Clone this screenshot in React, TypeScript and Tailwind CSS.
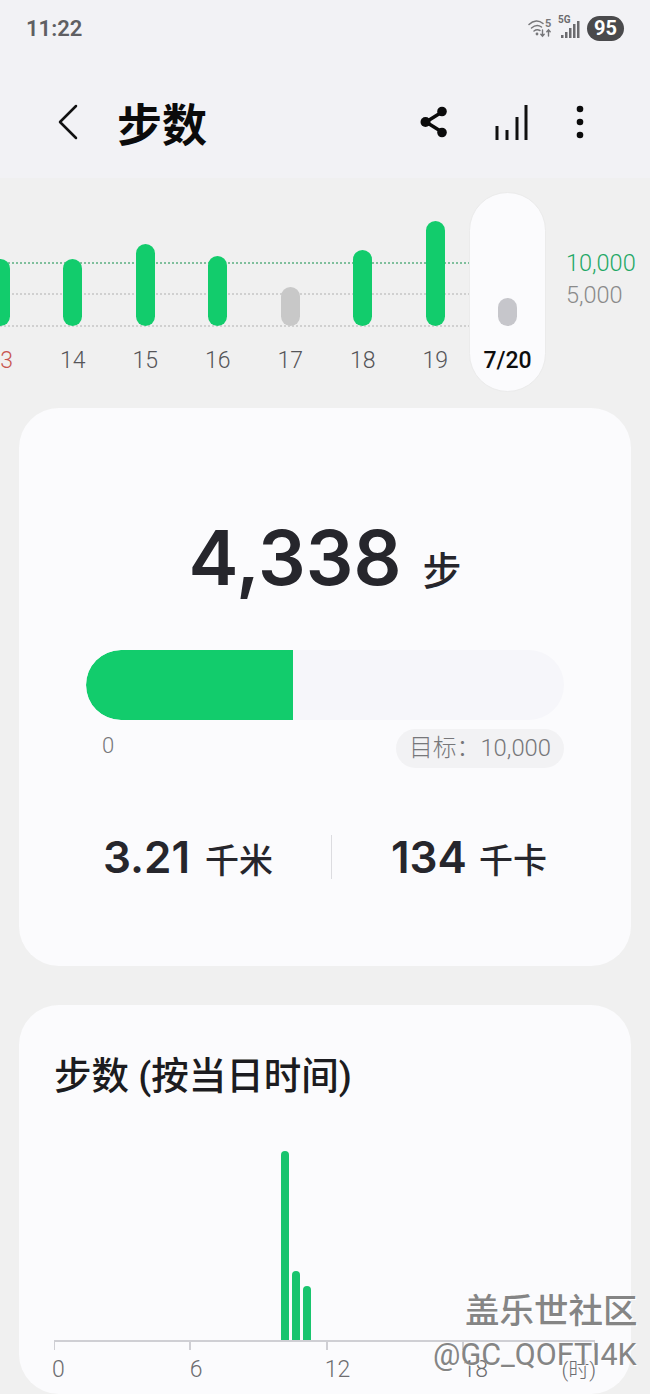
import React from "react";

const cjk = "font-['Inter','Noto_Sans_CJK_SC',sans-serif]";

const days = [
  { l: "13", h: 67, c: "bg-[#12cc6c]", t: "text-[#c8554f]" },
  { l: "14", h: 67, c: "bg-[#12cc6c]", t: "text-[#555558]" },
  { l: "15", h: 82, c: "bg-[#12cc6c]", t: "text-[#555558]" },
  { l: "16", h: 70, c: "bg-[#12cc6c]", t: "text-[#555558]" },
  { l: "17", h: 39, c: "bg-[#c8c8c8]", t: "text-[#555558]" },
  { l: "18", h: 76, c: "bg-[#12cc6c]", t: "text-[#555558]" },
  { l: "19", h: 105, c: "bg-[#12cc6c]", t: "text-[#555558]" },
];

function WifiIcon() {
  return (
    <svg width="26" height="22" viewBox="0 0 26 22" fill="none" stroke="#77777a" strokeLinecap="round">
      <path d="M1 7.500C5.500 3 11 3 15 6.500" strokeWidth="1.500" />
      <path d="M3.500 11C7 8 10.500 8 13.500 10" strokeWidth="1.500" />
      <path d="M6 14c2-1.500 4-1.500 6-.5" strokeWidth="1.500" />
      <circle cx="9" cy="17" r="1.400" fill="#77777a" stroke="none" />
      <path d="M14.500 13v6M12.800 17.300l1.700 1.900 1.700-1.900M20.500 19v-6M18.800 14.800l1.700-1.900 1.700 1.900" strokeWidth="1.400" />
      <text x="17" y="10" fontSize="11" fontWeight="700" fill="#77777a" stroke="none" fontFamily="Roboto">5</text>
    </svg>
  );
}

function SignalIcon() {
  return (
    <svg width="19" height="17" viewBox="0 0 19 17" fill="#6b6b6e">
      <rect x="0" y="14" width="2.500" height="3" />
      <rect x="4" y="11" width="2.500" height="6" />
      <rect x="8" y="7" width="2.500" height="10" />
      <rect x="12" y="3" width="2.500" height="14" />
      <rect x="16" y="0" width="2.500" height="17" />
    </svg>
  );
}

export default function App() {
  return (
    <div className={`relative w-[650px] h-[1394px] overflow-hidden bg-[#f0f0f0] ${cjk}`}>
      <div className="h-[178px] bg-[#f2f2f5] flex flex-col">
        <div className="h-[56px] pl-[26px] pr-[26px] flex items-center justify-between">
          <span className="text-[22px] font-semibold text-[#5f5f62] font-['Roboto',sans-serif]">11:22</span>
          <div className="flex items-center gap-[3px]">
            <WifiIcon />
            <div className="relative w-[23px] h-[22px] ml-[1px]">
              <span className="absolute left-0 -top-[2px] text-[10px] leading-[10px] font-bold text-[#6b6b6e] font-['Roboto',sans-serif]">5G</span>
              <div className="absolute left-[3px] top-[4px]"><SignalIcon /></div>
            </div>
            <div className="ml-[3px] w-[37px] h-[25px] rounded-full bg-[#4a4a4c] flex items-center justify-center text-white text-[20px] font-bold font-['Roboto',sans-serif]">95</div>
          </div>
        </div>
        <div className="flex-1 relative flex items-center pl-[57px] pr-[65px] pt-[10px]">
          <svg width="22" height="36" viewBox="0 0 22 36" fill="none" stroke="#111" strokeWidth="2.500" strokeLinecap="round" strokeLinejoin="round">
            <path d="M19 2 3 18l16 16" />
          </svg>
          <h1 className="ml-[38px] text-[45px] leading-none font-bold text-[#0b0b0b] font-['Noto_Sans_CJK_SC',sans-serif]">步数</h1>
          <div className="ml-auto flex items-center">
            <svg width="32" height="34" viewBox="0 0 32 34" fill="#0b0b0b" stroke="#0b0b0b">
              <path d="M24 7 8 17l16 10" fill="none" strokeWidth="3.500" />
              <circle cx="24" cy="6.500" r="4.800" stroke="none" />
              <circle cx="7.500" cy="17" r="5" stroke="none" />
              <circle cx="24" cy="27.500" r="4.800" stroke="none" />
            </svg>
            <svg className="ml-[44px]" width="34" height="38" viewBox="0 0 34 38" fill="none" stroke="#111" strokeWidth="3">
              <path d="M3 37V23M13 37V27M23 37V14M32 37V2" />
            </svg>
            <svg className="ml-[47px]" width="10" height="34" viewBox="0 0 10 34" fill="#0b0b0b">
              <circle cx="5" cy="4" r="3.300" />
              <circle cx="5" cy="17" r="3.300" />
              <circle cx="5" cy="30" r="3.300" />
            </svg>
          </div>
        </div>
      </div>

      <div className="relative h-[230px] overflow-hidden">
        <div className="absolute left-0 w-[470px] top-[84px] border-t-2 border-dotted border-[#7fbf9c]" />
        <div className="absolute left-0 w-[470px] top-[115px] border-t-2 border-dotted border-[#d0d0d0]" />
        <div className="absolute left-0 w-[470px] top-[147px] border-t-2 border-dotted border-[#d0d0d0]" />

        <div className="relative flex -ml-[36px] pt-[14px]">
          {days.map((d) => (
            <div key={d.l} className="w-[72.500px] shrink-0 h-[200px] flex flex-col items-center">
              <div className="h-[134px] flex items-end">
                <div className={`w-[19px] rounded-full ${d.c}`} style={{ height: d.h }} />
              </div>
              <span className={`mt-[21px] text-[23px] leading-[28px] font-light font-['Roboto',sans-serif] ${d.t}`}>{d.l}</span>
            </div>
          ))}
          <div className="-ml-[2.500px] w-[77px] shrink-0 h-[200px] rounded-full bg-[#fbfbfd] border border-[#ebebeb] flex flex-col items-center">
            <div className="h-[133px] flex items-end">
              <div className="w-[19px] h-[28px] rounded-full bg-[#c6c6cb]" />
            </div>
            <span className="mt-[21px] text-[23px] leading-[28px] font-medium text-[#0d0d0d] font-['Roboto',sans-serif]">7/20</span>
          </div>
          <div className="ml-[20px] pt-[55px] flex flex-col shrink-0 font-['Roboto',sans-serif] font-light text-[23.500px] leading-[32px]">
            <span className="text-[#1fa866]">10,000</span>
            <span className="text-[#8a8a8a]">5,000</span>
          </div>
        </div>
      </div>

      <div className="mx-[19px] h-[558px] rounded-[40px] bg-[#fbfbfd] flex flex-col">
        <div className="mt-[106px] flex items-baseline justify-center">
          <span className="text-[75px] leading-[88px] font-semibold text-[#26262c]">4,338</span>
          <span className="ml-[21px] text-[39px] font-medium text-[#26262c] font-['Noto_Sans_CJK_SC',sans-serif]">步</span>
        </div>
        <div className="mx-[67px] mt-[48px] h-[70px] rounded-full bg-[#f6f6fa] overflow-hidden">
          <div className="h-full w-[207px] bg-[#12cc6c] rounded-l-full" />
        </div>
        <div className="mx-[67px] mt-[9px] flex items-center justify-between">
          <span className="ml-[16px] mb-[6px] text-[22px] font-light text-[#77777a] font-['Roboto',sans-serif]">0</span>
          <span className="h-[39px] px-[13px] rounded-full bg-[#f2f2f4] flex items-center text-[23.800px] font-light text-[#77777a] font-['Roboto','Noto_Sans_CJK_SC',sans-serif]">目标：10,000</span>
        </div>
        <div className="mt-[61px] flex items-center">
          <div className="w-[312px] shrink-0 flex items-baseline justify-end pr-[58px]">
            <span className="text-[44px] leading-[56px] font-semibold text-[#26262c]">3.21</span>
            <span className="ml-[15px] text-[34px] font-medium text-[#26262c] font-['Noto_Sans_CJK_SC',sans-serif]">千米</span>
          </div>
          <div className="w-px h-[44px] bg-[#dcdce0]" />
          <div className="flex-1 flex items-baseline pl-[59px]">
            <span className="text-[44px] leading-[56px] font-semibold text-[#26262c]">134</span>
            <span className="ml-[12px] text-[34px] font-medium text-[#26262c] font-['Noto_Sans_CJK_SC',sans-serif]">千卡</span>
          </div>
        </div>
      </div>

      <div className="mx-[19px] mt-[39px] h-[389px] rounded-[40px] bg-[#fbfbfd] flex flex-col px-[35px]">
        <h2 className="mt-[46px] text-[37.500px] leading-[50px] font-medium text-[#1c1c20] font-['Roboto','Noto_Sans_CJK_SC',sans-serif]">步数 (按当日时间)</h2>
        <div className="mt-[49px] h-[190px] flex items-end gap-[3px] pl-[227px]">
          <div className="w-[8px] h-[189px] rounded-t-full bg-[#19c46e]" />
          <div className="w-[8px] h-[69px] rounded-t-full bg-[#19c46e]" />
          <div className="w-[8px] h-[54px] rounded-t-full bg-[#19c46e]" />
        </div>
        <div className="w-[541px] h-[10px] border-x border-t-2 border-[#cfcfd4] flex">
          <div className="w-[136px] border-r-2 border-[#cfcfd4]" />
          <div className="w-[137px] border-r-2 border-[#cfcfd4]" />
          <div className="w-[136px] border-r-2 border-[#cfcfd4]" />
        </div>
        <div className="-ml-[2px] mt-[5px] flex text-[23px] leading-[30px] font-light text-[#6d6d70] font-['Roboto','Noto_Sans_CJK_SC',sans-serif]">
          <span className="w-[138px]">0</span>
          <span className="w-[135px]">6</span>
          <span className="w-[138px]">12</span>
          <span className="w-[99px]">18</span>
          <span className="text-[21px]">(时)</span>
        </div>
      </div>

      <div className="absolute left-[465px] top-[1285px] text-[34.500px] leading-[46px] font-medium text-[#858585] [text-shadow:1px_1px_0_#ffffff] font-['Noto_Sans_CJK_SC',sans-serif] whitespace-nowrap">盖乐世社区</div>
      <div className="absolute left-[433px] top-[1338px] text-[30.500px] leading-[34px] text-[#858585] [text-shadow:1px_1px_0_#ffffff] font-['Roboto',sans-serif] whitespace-nowrap">@GC_QOFTI4K</div>
    </div>
  );
}
